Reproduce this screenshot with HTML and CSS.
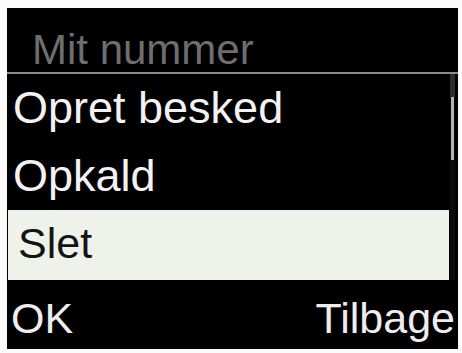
FILE: index.html
```html
<!DOCTYPE html>
<html>
<head>
<meta charset="utf-8">
<link rel="stylesheet" href="styles.css">
</head>
<body>
<div class="screen">
  <div class="header">Mit nummer</div>
  <div class="sep"></div>
  <div class="body">
    <div class="list">
      <div class="item">Opret besked</div>
      <div class="item">Opkald</div>
      <div class="item selected">Slet</div>
    </div>
    <div class="scroll">
      <div class="track-top"></div>
      <div class="thumb"></div>
    </div>
  </div>
  <div class="footer">
    <span>OK</span>
    <span>Tilbage</span>
  </div>
</div>
</body>
</html>
```
FILE: styles.css
```css
html, body {
  margin: 0;
  padding: 0;
  background: #fbfbfb;
}
body {
  font-family: "Liberation Sans", Arial, sans-serif;
}
.screen {
  margin: 8px 0 0 7px;
  width: 451px;
  height: 341px;
  background: #000;
  display: flex;
  flex-direction: column;
  overflow: hidden;
}
.header {
  box-sizing: border-box;
  height: 64px;
  padding: 20px 0 0 25px;
  line-height: 44px;
  font-size: 42px;
  color: #6e6e6e;
  white-space: nowrap;
}
.sep {
  height: 2px;
  background: #8c8c8c;
}
.body {
  display: flex;
  height: 206px;
}
.list {
  flex: 1;
  margin-left: 1px;
  display: flex;
  flex-direction: column;
}
.item {
  height: 68px;
  line-height: 68px;
  font-size: 45px;
  color: #f2f2f2;
  padding-left: 5px;
  white-space: nowrap;
}
.item.selected {
  height: 70px;
  line-height: 66px;
  background: #eef2ea;
  color: #141414;
  padding-left: 10px;
  font-size: 43px;
}
.scroll {
  width: 5px;
  margin: 0 3px 0 1px;
  display: flex;
  flex-direction: column;
  background: #0a0a0a;
}
.track-top {
  height: 23px;
  background: #2c2c2c;
}
.thumb {
  height: 63px;
  width: 3px;
  margin-left: 1px;
  background: #b4b4b4;
}
.footer {
  box-sizing: border-box;
  height: 69px;
  padding: 8px 3px 0 4px;
  line-height: 60px;
  font-size: 43px;
  color: #ededed;
  display: flex;
  justify-content: space-between;
}
```
